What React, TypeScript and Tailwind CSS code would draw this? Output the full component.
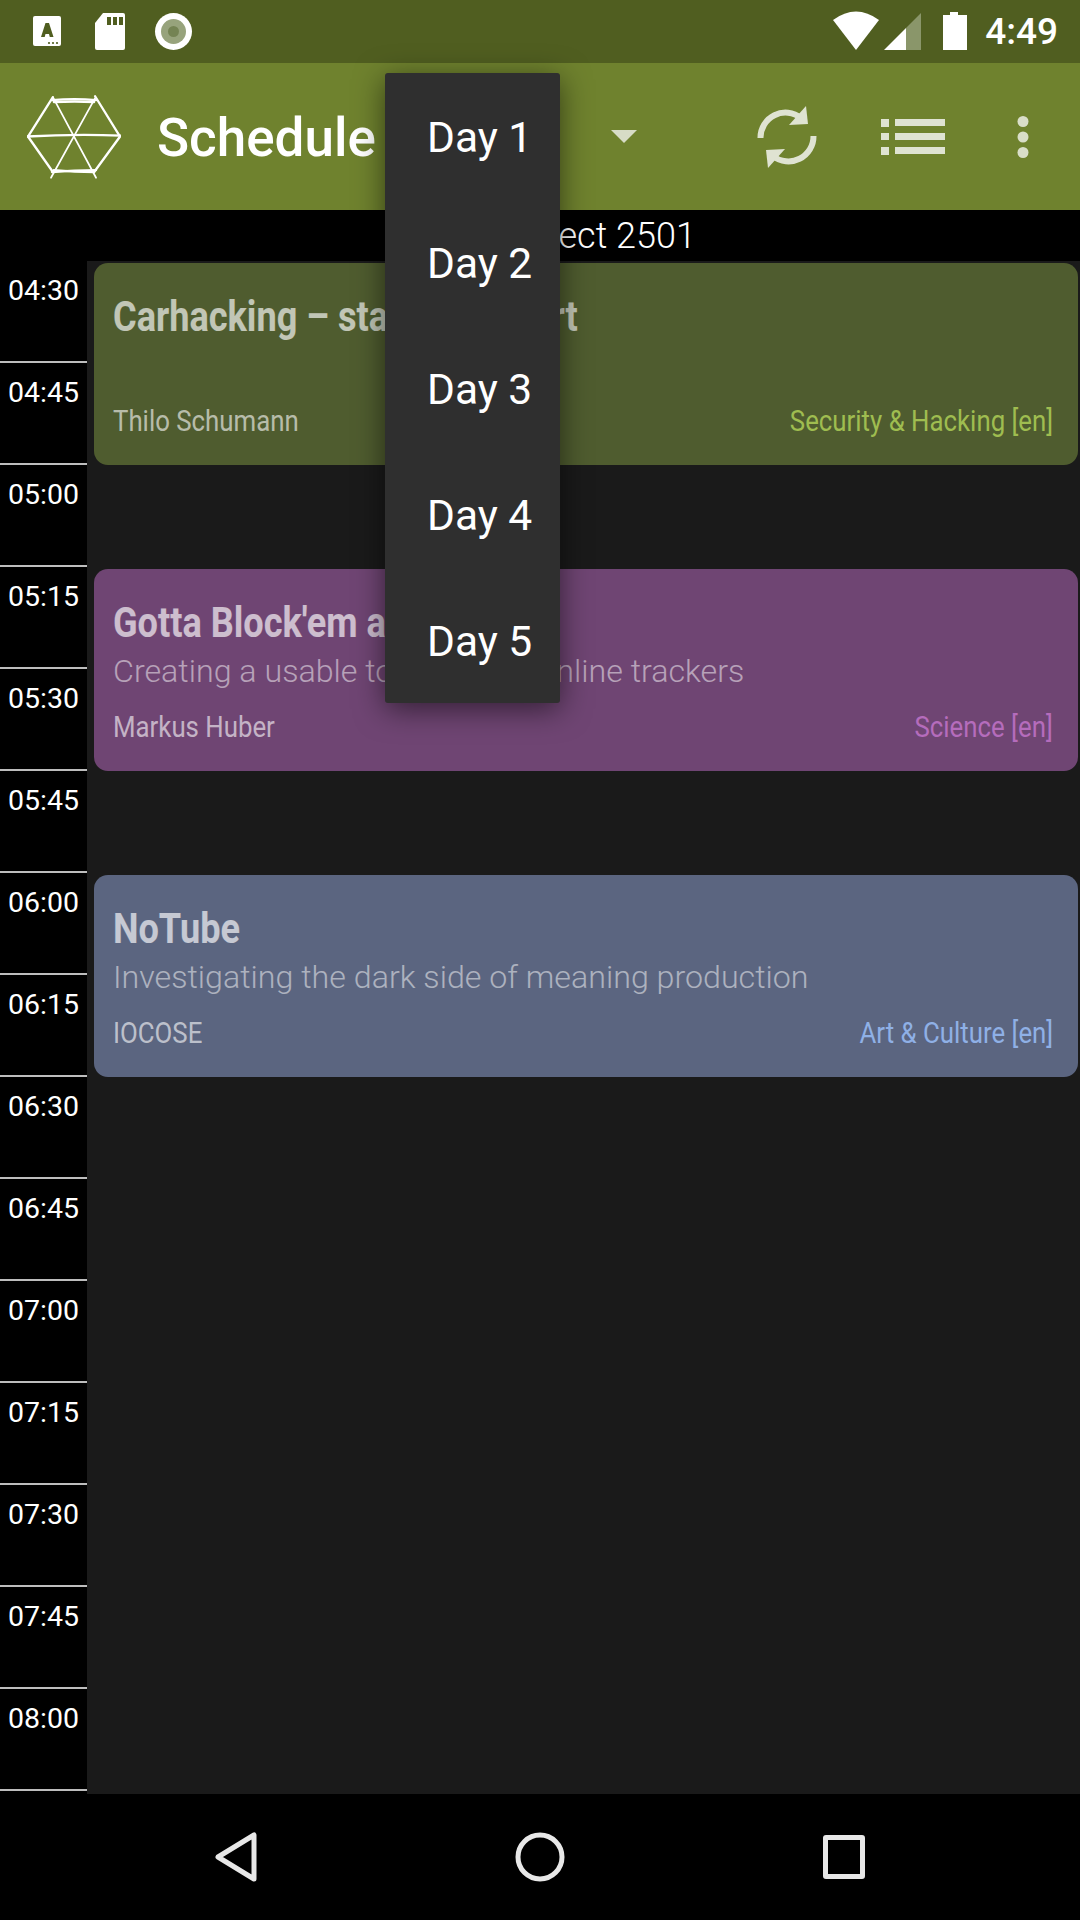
const TIMES = [
  "04:30", "04:45", "05:00", "05:15", "05:30", "05:45", "06:00", "06:15",
  "06:30", "06:45", "07:00", "07:15", "07:30", "07:45", "08:00",
];

const DAYS = ["Day 1", "Day 2", "Day 3", "Day 4", "Day 5"];

const SESSIONS = [
  {
    title: "Carhacking – state of the art",
    subtitle: "",
    speaker: "Thilo Schumann",
    track: "Security & Hacking [en]",
    card: "bg-[#4f5c2f]",
    trackColor: "text-[#9fbd50]",
  },
  {
    title: "Gotta Block'em all",
    subtitle: "Creating a usable tool against online trackers",
    speaker: "Markus Huber",
    track: "Science [en]",
    card: "bg-[#6f4573]",
    trackColor: "text-[#b56cbc]",
  },
  {
    title: "NoTube",
    subtitle: "Investigating the dark side of meaning production",
    speaker: "IOCOSE",
    track: "Art & Culture [en]",
    card: "bg-[#5b6580]",
    trackColor: "text-[#8fb0e6]",
  },
];

function StatusIcons() {
  return (
    <svg width="170" height="44" viewBox="0 0 170 44" className="ml-[30px]">
      <rect x="3" y="6" width="28" height="30" rx="2" fill="#fff" />
      <path d="M11 27 L15.5 13 L19 13 L23.5 27 L19.8 27 L19 24 L15.5 24 L14.7 27 Z" fill="#505e20" />
      <circle cx="19" cy="33" r="1.1" fill="#505e20" />
      <circle cx="23" cy="33" r="1.1" fill="#505e20" />
      <circle cx="27" cy="33" r="1.1" fill="#505e20" />
      <path d="M73 3 H93 Q95 3 95 5 V38 Q95 40 93 40 H67 Q65 40 65 38 V13 Z" fill="#fff" />
      <rect x="77" y="7" width="4" height="8" fill="#505e20" />
      <rect x="83" y="7" width="4" height="8" fill="#505e20" />
      <rect x="89" y="7" width="4" height="8" fill="#505e20" />
      <circle cx="143.5" cy="21.5" r="18.5" fill="#fff" />
      <circle cx="143.5" cy="21.5" r="12.5" fill="#97a37c" />
      <circle cx="143.5" cy="21.5" r="5.5" fill="#748353" />
    </svg>
  );
}

function WifiSignalBattery() {
  return (
    <svg width="136" height="44" viewBox="0 0 136 44">
      <path d="M0 10 Q23 -7 46 10 L23 40 Z" fill="#fff" />
      <path d="M51 40 L73 18 V40 Z" fill="#fff" />
      <path d="M73 18 L88 3 V40 H73 Z" fill="#8a966a" />
      <path d="M117 2 H125 V5 H134 V40 H110 V5 H117 Z" fill="#fff" />
    </svg>
  );
}

// hand-sketched hexagon, strokes run a little past the corners
const LOGO_OUTER = [
  "M26 5 Q50 3 72 5",
  "M28 7 Q50 6 70 7",
  "M71 1 L97 43 L70 80",
  "M27 2 L1 43 L27 80",
  "M26 80 Q50 78 72 78",
  "M28 78 Q50 80 70 80",
  "M0 43 Q50 40 98 42",
];
const LOGO_SPOKES = ["M27 2 L72 86", "M71 3 L25 86"];

function Logo() {
  return (
    <svg width="94" height="84" viewBox="0 0 98 87" className="ml-[27px] shrink-0">
      {LOGO_OUTER.map((d) => (
        <path key={d} d={d} fill="none" stroke="#fff" strokeWidth="2.4" strokeLinecap="round" />
      ))}
      {LOGO_SPOKES.map((d) => (
        <path key={d} d={d} fill="none" stroke="#fff" strokeWidth="1.8" strokeLinecap="round" />
      ))}
    </svg>
  );
}

function SyncIcon() {
  return (
    <svg width="60" height="64" viewBox="0 0 60 64" className="text-[#dfe3d2]">
      <path d="M3.5 33 A25 25 0 0 1 44 13" fill="none" stroke="currentColor" strokeWidth="6" />
      <path d="M49 1 L51 19 L32 20 Z" fill="currentColor" />
      <path d="M56.5 31 A25 25 0 0 1 16 51" fill="none" stroke="currentColor" strokeWidth="6" />
      <path d="M11 63 L9 45 L28 44 Z" fill="currentColor" />
    </svg>
  );
}

function ListIcon() {
  return (
    <svg width="64" height="36" viewBox="0 0 64 36" className="text-[#dfe3d2]">
      <path d="M0 0h8v8H0zM14 0h50v7H14zM0 14h8v7H0zM14 14h50v7H14zM0 28h8v8H0zM14 28h50v7H14z" fill="currentColor" />
    </svg>
  );
}

function MoreIcon() {
  return (
    <svg width="12" height="42" viewBox="0 0 12 42" className="text-[#d9dec8]">
      <circle cx="6" cy="5.5" r="5.5" fill="currentColor" />
      <circle cx="6" cy="21" r="5.5" fill="currentColor" />
      <circle cx="6" cy="36.5" r="5.5" fill="currentColor" />
    </svg>
  );
}

function SessionCard({ session }: { session: (typeof SESSIONS)[number] }) {
  return (
    <div className={`h-[202px] rounded-[14px] pl-[19px] pr-[25px] pt-[29px] ${session.card}`}>
      <div className="origin-left scale-x-[0.86] whitespace-nowrap text-[42px] font-bold leading-[50px] text-white/65">
        {session.title}
      </div>
      <div className="h-[46px] whitespace-nowrap text-[32.2px] font-light leading-[46px] text-white/50">
        {session.subtitle}
      </div>
      <div className="mt-[13px] flex h-[40px] items-center justify-between text-[30px] leading-[40px]">
        <span className="origin-left scale-x-[0.86] whitespace-nowrap text-white/60">{session.speaker}</span>
        <span className={`origin-right scale-x-[0.86] whitespace-nowrap ${session.trackColor}`}>{session.track}</span>
      </div>
    </div>
  );
}

export default function App() {
  return (
    <div className="relative flex h-[1920px] w-[1080px] flex-col overflow-hidden bg-black font-['Roboto',sans-serif] text-white">
      {/* Status bar */}
      <div className="flex h-[63px] shrink-0 items-center justify-between bg-[#505e20]">
        <StatusIcons />
        <div className="flex items-center">
          <WifiSignalBattery />
          <span className="ml-[16px] mr-[22px] text-[37px] font-medium leading-none">4:49</span>
        </div>
      </div>

      {/* Toolbar */}
      <div className="flex h-[147px] shrink-0 items-center bg-[#6f822e]">
        <Logo />
        <span className="ml-[36px] mt-[3px] text-[53px] font-medium leading-none">Schedule</span>
        <div className="ml-[235px] h-0 w-0 border-x-[13px] border-t-[13px] border-x-transparent border-t-[#d7dcc6]" />
        <div className="ml-[120px]"><SyncIcon /></div>
        <div className="ml-[64px]"><ListIcon /></div>
        <div className="ml-[72px]"><MoreIcon /></div>
      </div>

      {/* Room header */}
      <div className="flex h-[51px] shrink-0 items-center justify-center bg-black pl-[112px] text-[36px] font-light leading-none">
        Project 2501
      </div>

      {/* Timeline */}
      <div className="flex min-h-0 flex-1 overflow-hidden bg-[#1a1a1a]">
        <div className="w-[87px] shrink-0 bg-black">
          {TIMES.map((time) => (
            <div key={time} className="h-[102px] border-b-2 border-[#bdbdbd] pl-[8px] pt-[14px] text-[28.5px] leading-[32px]">
              {time}
            </div>
          ))}
        </div>
        <div className="flex flex-1 flex-col gap-[104px] pl-[7px] pr-[2px] pt-[2px]">
          {SESSIONS.map((session) => (
            <SessionCard key={session.title} session={session} />
          ))}
        </div>
      </div>

      {/* Bottom nav */}
      <div className="flex h-[126px] shrink-0 items-center bg-black pl-[214px]">
        <svg width="46" height="52" viewBox="0 0 46 52">
          <path d="M40 4 V48 L4 26 Z" fill="none" stroke="#e8e8e8" strokeWidth="5" strokeLinejoin="round" />
        </svg>
        <svg width="52" height="52" viewBox="0 0 52 52" className="ml-[254px]">
          <circle cx="26" cy="26" r="22" fill="none" stroke="#e8e8e8" strokeWidth="5" />
        </svg>
        <div className="ml-[257px] h-[44px] w-[42px] rounded-[3px] border-[5px] border-[#e8e8e8]" />
      </div>

      {/* Day dropdown */}
      <div className="absolute left-[385px] top-[73px] w-[175px] rounded-[3px] bg-[#2f2f2f] shadow-[0_6px_30px_rgba(0,0,0,0.55)]">
        {DAYS.map((day) => (
          <div key={day} className="flex h-[126px] items-center pl-[42px] pt-[5px] text-[42.5px] leading-none">
            {day}
          </div>
        ))}
      </div>
    </div>
  );
}
